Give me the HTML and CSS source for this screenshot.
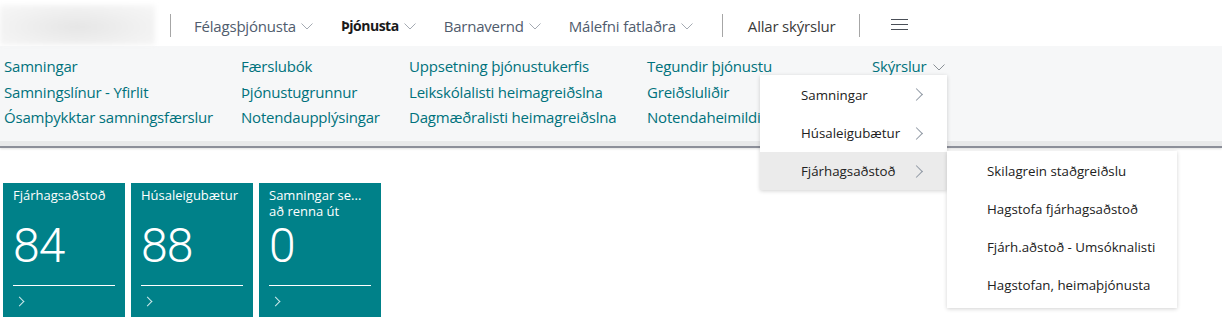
FILE: index.html
```html
<!DOCTYPE html>
<html>
<head>
    <link rel="stylesheet" href="styles.css">
</head>
<body>
    <div class="topbar">
        <div class="logo"></div>
        <div class="sep first"></div>
        <div class="nav">
            <span class="nav-item">Félagsþjónusta<svg class="chev" viewBox="0 0 12 7"><path d="M0.5 0.5 L6 6 L11.5 0.5"/></svg></span>
            <span class="nav-item active">Þjónusta<svg class="chev" viewBox="0 0 12 7"><path d="M0.5 0.5 L6 6 L11.5 0.5"/></svg></span>
            <span class="nav-item">Barnavernd<svg class="chev" viewBox="0 0 12 7"><path d="M0.5 0.5 L6 6 L11.5 0.5"/></svg></span>
            <span class="nav-item">Málefni fatlaðra<svg class="chev" viewBox="0 0 12 7"><path d="M0.5 0.5 L6 6 L11.5 0.5"/></svg></span>
        </div>
        <div class="sep"></div>
        <span class="nav-item reports">Allar skýrslur</span>
        <div class="sep last"></div>
        <div class="burger">
            <span></span><span></span><span></span>
        </div>
    </div>

    <div class="subnav">
        <div class="col">
            <a>Samningar</a>
            <a>Samningslínur - Yfirlit</a>
            <a>Ósamþykktar samningsfærslur</a>
        </div>
        <div class="col">
            <a>Færslubók</a>
            <a>Þjónustugrunnur</a>
            <a>Notendaupplýsingar</a>
        </div>
        <div class="col">
            <a>Uppsetning þjónustukerfis</a>
            <a>Leikskólalisti heimagreiðslna</a>
            <a>Dagmæðralisti heimagreiðslna</a>
        </div>
        <div class="col">
            <a>Tegundir þjónustu</a>
            <a>Greiðsluliðir</a>
            <a>Notendaheimildir</a>
        </div>
        <div class="col">
            <a>Skýrslur<svg class="chev grey" viewBox="0 0 12 7"><path d="M0.5 0.5 L6 6 L11.5 0.5"/></svg></a>
        </div>
    </div>

    <div class="tiles">
        <div class="tile">
            <div class="tile-title">Fjárhagsaðstoð</div>
            <div class="tile-value">84</div>
            <div class="tile-foot"><span class="arrow"></span></div>
        </div>
        <div class="tile">
            <div class="tile-title">Húsaleigubætur</div>
            <div class="tile-value">88</div>
            <div class="tile-foot"><span class="arrow"></span></div>
        </div>
        <div class="tile">
            <div class="tile-title">Samningar se...<br>að renna út</div>
            <div class="tile-value">0</div>
            <div class="tile-foot"><span class="arrow"></span></div>
        </div>
    </div>

    <div class="menu">
        <div class="menu-item">Samningar<span class="more"></span></div>
        <div class="menu-item">Húsaleigubætur<span class="more"></span></div>
        <div class="menu-item hover">Fjárhagsaðstoð<span class="more"></span></div>
    </div>

    <div class="submenu">
        <div class="sub-item">Skilagrein staðgreiðslu</div>
        <div class="sub-item">Hagstofa fjárhagsaðstoð</div>
        <div class="sub-item">Fjárh.aðstoð - Umsóknalisti</div>
        <div class="sub-item">Hagstofan, heimaþjónusta</div>
    </div>
</body>
</html>
```

FILE: styles.css
```css
body {
    margin: 0;
    background: #fff;
    font-family: "Open Sans", "Noto Sans", sans-serif;
    color: #212121;
    overflow: hidden;
}

.topbar {
    display: flex;
    align-items: center;
    height: 46px;
    padding-top: 5px;
    box-sizing: border-box;
}

.logo {
    width: 155px;
    height: 40px;
    align-self: flex-start;
    background: radial-gradient(ellipse at 50% 55%, #e6e6e6 0%, #f1f1f1 60%, #f7f7f7 100%);
    filter: blur(2px);
}

.sep {
    width: 1px;
    height: 23px;
    background: #a6a6a6;
    margin: 0 25px 0 29px;
}

.sep.first {
    margin: 0 23px 0 15px;
}

.sep.last {
    margin: 0 31px 0 24px;
}

.nav {
    display: flex;
    gap: 28px;
}

.nav-item {
    font-size: 15px;
    color: #505c6d;
    display: flex;
    align-items: center;
    letter-spacing: -0.2px;
}

.nav-item.active {
    font-size: 14px;
    font-weight: 700;
    color: #1a1a1a;
    letter-spacing: -0.5px;
}

.nav-item.reports {
    color: #3b3b3b;
}

.chev {
    width: 12px;
    height: 7px;
    margin: 2px 0 0 5px;
    fill: none;
    stroke: #a4aab2;
    stroke-width: 1;
}

.chev.grey {
    stroke: #8a9096;
    margin-left: 7px;
}

.burger {
    display: flex;
    flex-direction: column;
    gap: 4px;
    margin-top: -2px;
}

.burger span {
    width: 17px;
    height: 1px;
    background: #4a4f57;
}

.subnav {
    display: grid;
    grid-template-columns: 237px 168px 238px 225px auto;
    height: 87px;
    padding: 8px 0 0 4px;
    background: #f6f7f8;
    border-bottom: 5px solid #e8e9ea;
    box-shadow: 0 2px 0 #8c8f99, 0 3px 2px rgba(0,0,0,0.12);
}

.col {
    display: flex;
    flex-direction: column;
}

.col a {
    font-size: 15px;
    line-height: 25.5px;
    color: #00727c;
    white-space: nowrap;
    letter-spacing: -0.2px;
    display: flex;
    align-items: center;
}

.tiles {
    display: flex;
    gap: 6px;
    padding: 37px 0 0 3px;
}

.tile {
    width: 122px;
    height: 140px;
    background: #008189;
    color: #fff;
    padding: 4px 10px 0 10px;
    box-sizing: border-box;
    display: flex;
    flex-direction: column;
}

.tile-title {
    font-size: 13px;
    line-height: 16px;
    height: 32px;
}

.tile-value {
    font-family: Roboto, "Open Sans", sans-serif;
    font-size: 48px;
    font-weight: 300;
    line-height: 40px;
    margin-top: 7px;
    height: 59px;
    letter-spacing: -1px;
}

.tile-foot {
    border-top: 1px solid #fff;
    padding-top: 12px;
    padding-left: 3px;
}

.arrow {
    display: block;
    width: 6px;
    height: 6px;
    border-right: 1px solid #cfe9eb;
    border-top: 1px solid #cfe9eb;
    transform: rotate(45deg);
}

.menu {
    position: absolute;
    left: 760px;
    top: 75px;
    width: 187px;
    background: #fff;
    box-shadow: 0 1px 4px rgba(0,0,0,0.18);
}

.menu-item {
    height: 38px;
    display: flex;
    align-items: center;
    padding-left: 41px;
    font-size: 13.3px;
    color: #212121;
    position: relative;
}

.menu-item:first-child {
    height: 39px;
}

.menu-item.hover {
    background: #ebebeb;
}

.more {
    position: absolute;
    right: 26px;
    width: 8px;
    height: 8px;
    border-right: 1px solid #8f98a3;
    border-top: 1px solid #8f98a3;
    transform: rotate(45deg);
}

.submenu {
    position: absolute;
    left: 947px;
    top: 151px;
    width: 230px;
    padding: 1px 0 4px;
    background: #fff;
    box-shadow: 0 1px 4px rgba(0,0,0,0.18);
}

.sub-item {
    height: 38px;
    display: flex;
    align-items: center;
    padding-left: 40px;
    font-size: 13.3px;
    color: #212121;
}
```
